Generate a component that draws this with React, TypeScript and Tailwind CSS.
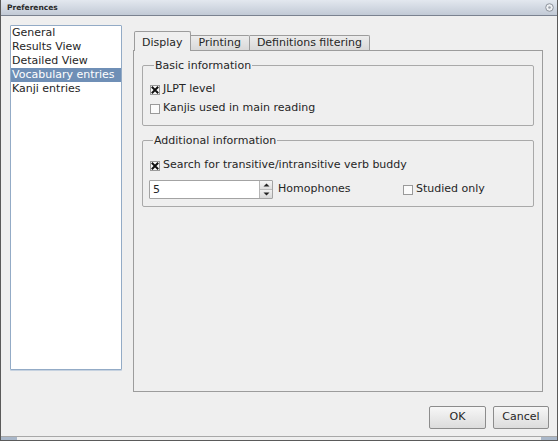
import React from 'react';

const font = { fontFamily: '"DejaVu Sans", Verdana, sans-serif' };

function CheckBox({ checked }: { checked?: boolean }) {
  return (
    <svg width="10" height="10" viewBox="0 0 10 10" className="shrink-0">
      <rect x="0.5" y="0.5" width="9" height="9" fill="#fbfbfb" stroke="#9a9a9a" />
      {checked && (
        <path d="M2.5 2.5 L7.5 7.5 M7.5 2.5 L2.5 7.5" stroke="#111" strokeWidth="2" strokeLinecap="square" />
      )}
    </svg>
  );
}

function Check({ label, checked }: { label: string; checked?: boolean }) {
  return (
    <div className="flex items-center gap-[3px]">
      <CheckBox checked={checked} />
      <span>{label}</span>
    </div>
  );
}

const items = ['General', 'Results View', 'Detailed View', 'Vocabulary entries', 'Kanji entries'];

export default function App() {
  return (
    <div
      className="w-[558px] h-[441px] flex flex-col bg-[#efefef] border-x border-b border-[#5a5a5a] text-[11px] text-[#262626] overflow-hidden"
      style={font}
    >
      {/* title bar */}
      <div className="h-[16px] shrink-0 flex items-center justify-between pl-[6px] pr-[3px] bg-gradient-to-b from-[#e3e8ef] to-[#c2cad6] border-b border-[#7a8290]">
        <span className="text-[7.5px] font-bold text-[#2a2a2a]">Preferences</span>
        <svg width="9" height="9" viewBox="0 0 9 9">
          <circle cx="4.5" cy="4.5" r="3.8" fill="#eef0f3" stroke="#8d939c" />
          <circle cx="4.5" cy="4.5" r="1.3" fill="#9ba1aa" />
        </svg>
      </div>

      <div className="flex-1 flex flex-col">
        <div className="flex items-start pt-[9px] pl-[9px]">
          {/* page list */}
          <div className="w-[112px] h-[345px] bg-white border border-[#93abc6] rounded-[1px] shadow-[0_1px_0_#c6d2e0]">
            {items.map((it, i) => (
              <div
                key={it}
                className={
                  'h-[14px] leading-[14px] pl-[1px] ' +
                  (i === 3 ? 'bg-[#6f8fb6] text-white' : '')
                }
              >
                {it}
              </div>
            ))}
          </div>

          {/* tab widget */}
          <div className="ml-[11px] mt-[6px] w-[410px] flex flex-col">
            <div className="flex items-end h-[19px] pl-[1px] relative z-10">
              <div className="h-[20px] -mb-[1px] px-[7px] pt-[3px] bg-[#efefef] border border-b-0 border-[#9c9c9c] rounded-t-[2px]">
                Display
              </div>
              <div className="h-[15px] px-[8px] leading-[14px] bg-gradient-to-b from-[#ececec] to-[#d9d9d9] border border-l-0 border-b-0 border-[#9c9c9c] rounded-tr-[2px]">
                Printing
              </div>
              <div className="h-[15px] px-[7px] leading-[14px] bg-gradient-to-b from-[#ececec] to-[#d9d9d9] border border-l-0 border-b-0 border-[#9c9c9c] rounded-tr-[2px]">
                Definitions filtering
              </div>
            </div>
            <div className="h-[342px] border border-[#9c9c9c] bg-[#efefef] px-[8px] pt-[8px]">
              <fieldset className="border border-[#a9a9a9] rounded-[2px] pl-[7px] pb-[7px]">
                <legend className="ml-[4px] px-[1px] leading-[13px]">Basic information</legend>
                <div className="pt-[8px]">
                  <div className="h-[19px] flex items-center">
                    <Check label="JLPT level" checked />
                  </div>
                  <div className="h-[19px] flex items-center">
                    <Check label="Kanjis used in main reading" />
                  </div>
                </div>
              </fieldset>

              <fieldset className="mt-[8px] border border-[#a9a9a9] rounded-[2px] pl-[6px] pb-[7px]">
                <legend className="ml-[4px] px-[1px] leading-[13px]">Additional information</legend>
                <div className="pt-[9px]">
                  <div className="h-[19px] flex items-center pl-[1px]">
                    <Check label="Search for transitive/intransitive verb buddy" checked />
                  </div>
                  <div className="mt-[5px] flex items-center">
                    <div className="w-[124px] h-[19px] flex bg-white border border-[#a3a3a3] rounded-[1px]">
                      <div className="flex-1 pl-[3px] leading-[17px]">5</div>
                      <div className="w-[13px] flex flex-col border-l border-[#b5b5b5]">
                        <div className="flex-1 flex items-center justify-center bg-gradient-to-b from-[#f6f6f6] to-[#dedede] border-b border-[#bcbcbc]">
                          <svg width="7" height="4" viewBox="0 0 7 4"><path d="M0.5 3.5 L3.5 0.5 L6.5 3.5 Z" fill="#222" /></svg>
                        </div>
                        <div className="flex-1 flex items-center justify-center bg-gradient-to-b from-[#f0f0f0] to-[#d8d8d8]">
                          <svg width="7" height="4" viewBox="0 0 7 4"><path d="M0.5 0.5 L3.5 3.5 L6.5 0.5 Z" fill="#222" /></svg>
                        </div>
                      </div>
                    </div>
                    <span className="ml-[5px] w-[125px]">Homophones</span>
                    <Check label="Studied only" />
                  </div>
                </div>
              </fieldset>
            </div>
          </div>
        </div>

        {/* buttons */}
        <div className="flex justify-end gap-[7px] pr-[8px] mt-[14px]">
          <button className="w-[57px] h-[23px] border border-[#8c8c8c] rounded-[2px] bg-gradient-to-b from-[#f7f7f7] to-[#dcdcdc] text-[11px]">
            OK
          </button>
          <button className="w-[56px] h-[23px] border border-[#8c8c8c] rounded-[2px] bg-gradient-to-b from-[#f7f7f7] to-[#dcdcdc] text-[11px]">
            Cancel
          </button>
        </div>

        <div className="mt-auto h-[4px] flex border-t border-[#a8a8a8]">
          <div className="w-[16px] bg-[#a9b7c9]" />
          <div className="flex-1" />
          <div className="w-[16px] bg-[#a9b7c9]" />
        </div>
      </div>
    </div>
  );
}
